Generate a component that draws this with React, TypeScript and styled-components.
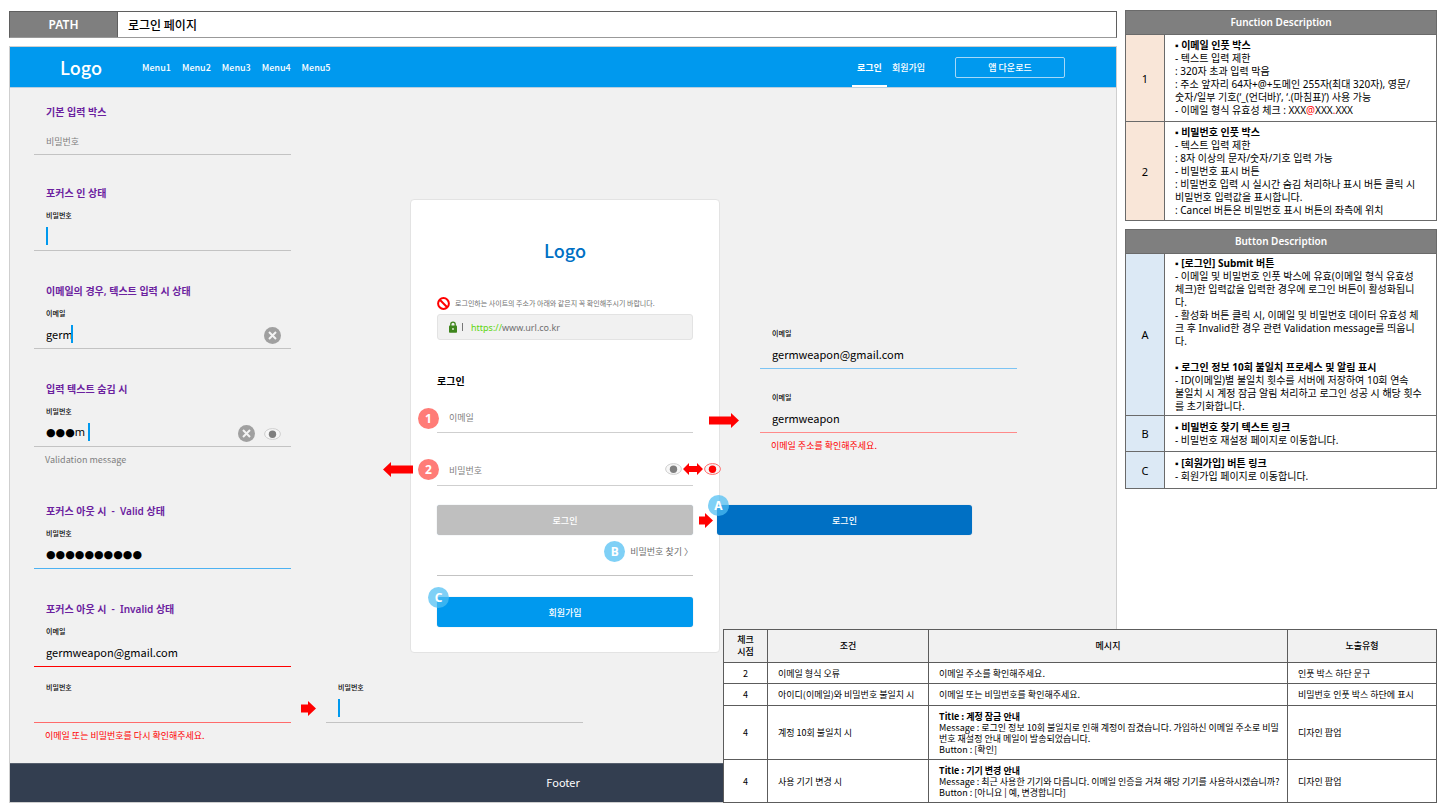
import React from 'react';
import styled, { createGlobalStyle } from 'styled-components';

const color = {
  blue: '#0099ee',
  deepBlue: '#0070c4',
  purple: '#6b219f',
  red: '#ff0000',
  grey: '#7f7f7f',
  line: '#c3c3c3',
  canvas: '#f1f1f1',
};

const font = {
  base: '"Noto Sans CJK KR", "Noto Sans", sans-serif',
  wide: '"Noto Sans", "Noto Sans CJK KR", sans-serif',
};

const GlobalStyle = createGlobalStyle`
  *, *::before, *::after { box-sizing: border-box; }
  body {
    margin: 0;
    background: #fff;
    color: #000;
    font-family: ${font.base};
    font-size: 10px;
    line-height: 13px;
  }
  a { color: inherit; text-decoration: none; }
  h1, h2, p { margin: 0; font-weight: 400; }
  button, input { font-family: inherit; margin: 0; }
  button { cursor: pointer; }
`;

/* ---------- page ---------- */

const Page = styled.div`
  display: grid;
  grid-template-columns: minmax(0, 1fr) 312px;
  column-gap: 8px;
  padding: 10px 7px 9px 9px;
`;

const Stage = styled.div`
  grid-column: 1;
  grid-row: 1;
  display: flex;
  flex-direction: column;
  gap: 8px;
  padding-top: 1px;
`;

const Notes = styled.aside`
  grid-column: 2;
  grid-row: 1;
  display: flex;
  flex-direction: column;
  gap: 8px;
  font-family: ${font.wide};
`;

const PathBar = styled.div`
  display: flex;
  height: 27px;
  border: 1px solid #5f5f5f;
  border-bottom-color: #999;
  line-height: 25px;
  font-size: 12px;
`;

const PathLabel = styled.div`
  width: 108px;
  background: #7f7f7f;
  border-right: 1px solid #5f5f5f;
  color: #fff;
  font-family: ${font.wide};
  font-weight: 600;
  text-align: center;
`;

const PathName = styled.h1`
  padding-left: 10px;
  font-size: 12px;
  font-weight: 500;
`;

const Frame = styled.div`
  flex: 1;
  display: flex;
  flex-direction: column;
  border: 1px solid #cfcfcf;
  background: ${color.canvas};
`;

/* ---------- site header and footer ---------- */

const Header = styled.header`
  display: flex;
  align-items: center;
  height: 41px;
  padding: 0 51px 0 50px;
  background: ${color.blue};
  border-bottom: 1px solid #b9cfdf;
  color: #fff;
  font-size: 9px;
  font-weight: 500;
`;

const Logo = styled.a<{ $tone?: string }>`
  display: block;
  color: ${(p) => p.$tone ?? '#fff'};
  font-size: 18px;
  font-weight: 500;
  line-height: 28px;
  text-align: center;
`;

const Menu = styled.nav`
  display: flex;
  flex: 1;
  gap: 11px;
  margin-left: 40px;
`;

const Account = styled.nav`
  display: flex;
  align-self: stretch;
  margin-right: 25px;
`;

const AccountLink = styled.a<{ $active?: boolean }>`
  display: flex;
  align-items: center;
  padding: 2px 5px 0;
  border-bottom: 2px solid ${(p) => (p.$active ? '#fff' : 'transparent')};
  font-weight: ${(p) => (p.$active ? 700 : 500)};
`;

const DownloadButton = styled.button`
  width: 110px;
  height: 21px;
  padding: 0;
  border: 1px solid #a5d8f8;
  border-radius: 2px;
  background: transparent;
  color: #fff;
  font-size: 9px;
  font-weight: 500;
`;

const Footer = styled.footer`
  height: 39px;
  border-top: 1px solid #565f6d;
  background: #333e50;
  color: #fff;
  font-size: 11px;
  line-height: 37px;
  text-align: center;
`;

/* ---------- canvas of states ---------- */

const Canvas = styled.main`
  flex: 1;
  display: grid;
  grid-template-columns:
    minmax(0, 257fr) minmax(0, 119fr) minmax(0, 310fr)
    minmax(0, 40fr) minmax(0, 257fr) minmax(0, 99fr);
  align-items: start;
  padding: 16px 0 19px 24px;
`;

const StateColumn = styled.div`
  grid-column: 1;
`;

const ResultColumn = styled.div`
  grid-column: 5;
  padding-top: 223px;
`;

const StateBlock = styled.section<{ $after?: number; $gap?: number }>`
  display: flex;
  flex-direction: column;
  gap: ${(p) => p.$gap ?? 8}px;
  margin-bottom: ${(p) => p.$after ?? 32}px;
`;

const StateTitle = styled.h2`
  padding-left: 12px;
  color: ${color.purple};
  font-family: ${font.wide};
  font-size: 10px;
  font-weight: 600;
  line-height: 16px;
  white-space: pre;
`;

const FieldBox = styled.div`
  position: relative;
`;

const FieldLabel = styled.label`
  display: block;
  padding-left: 12px;
  font-size: 7px;
  font-weight: 500;
  line-height: 12px;
`;

const InputRow = styled.div<{ $line: string; $tall?: boolean }>`
  position: relative;
  display: flex;
  align-items: center;
  gap: 9px;
  height: ${(p) => (p.$tall ? 34 : 30)}px;
  padding-right: 10px;
  border-bottom: 1px solid ${(p) => p.$line};
`;

const TextInput = styled.input<{ $masked?: boolean }>`
  flex: 1;
  min-width: 0;
  height: 24px;
  padding: 0 0 0 12px;
  border: 0;
  outline: 0;
  background: transparent;
  color: #000;
  font-family: ${(p) => (p.$masked ? '"Noto Sans", "DejaVu Sans", sans-serif' : font.base)};
  font-size: 11px;
  &::placeholder { color: ${color.grey}; font-size: 9px; opacity: 1; }
`;

const Caret = styled.span<{ $at: number }>`
  position: absolute;
  top: 6px;
  left: ${(p) => p.$at}px;
  width: 2px;
  height: 18px;
  background: ${color.blue};
`;

const IconButton = styled.button`
  display: flex;
  padding: 4px 0 0;
  border: 0;
  background: none;
`;

const Message = styled.p<{ $error?: boolean }>`
  padding: 5px 0 0 11px;
  color: ${(p) => (p.$error ? color.red : color.grey)};
  font-size: 9px;
  line-height: 16px;
`;

const RetryRow = styled.div`
  display: grid;
  grid-template-columns: 100% 35px 100%;
  align-items: center;
  margin-top: 6px;
  & > svg { margin: 12px auto 0; }
`;

/* ---------- login card ---------- */

const Card = styled.form`
  grid-column: 3;
  position: relative;
  margin-top: 95px;
  padding: 36px 26px 25px;
  border: 1px solid #e3e3e3;
  border-radius: 4px;
  background: #fff;
`;

const Notice = styled.p`
  display: flex;
  align-items: center;
  gap: 5px;
  margin-top: 32px;
  color: #6f6f6f;
  font-size: 7px;
  line-height: 14px;
  white-space: nowrap;
`;

const AddressBar = styled.div`
  display: flex;
  align-items: center;
  height: 26px;
  margin-top: 4px;
  padding: 0 11px;
  border: 1px solid #e3e3e3;
  border-radius: 3px;
  background: ${color.canvas};
  color: #6f6f6f;
  font-family: ${font.wide};
  font-size: 9px;
`;

const Divider = styled.span`
  width: 1px;
  height: 8px;
  margin: 0 8px 0 5px;
  background: #777;
`;

const Scheme = styled.span`
  color: #5fd60f;
`;

const CardTitle = styled.h2`
  margin: 33px 0 10px;
  font-size: 10px;
  font-weight: 700;
  line-height: 16px;
`;

const CardField = styled.div`
  position: relative;
  margin-bottom: 19px;
`;

const ActionRow = styled.div`
  position: relative;
`;

const WideButton = styled.button<{ $fill: string }>`
  display: block;
  width: 100%;
  height: 30px;
  padding: 0;
  border: 0;
  border-radius: 3px;
  background: ${(p) => p.$fill};
  box-shadow: 0 0 1px #9fb4c4;
  color: #fff;
  font-size: 9px;
  font-weight: 500;
`;

const FindRow = styled.div`
  display: flex;
  align-items: center;
  justify-content: flex-end;
  gap: 5px;
  height: 34px;
  padding-bottom: 1px;
  color: #6f6f6f;
  font-size: 9px;
`;

const Rule = styled.hr`
  margin: 6px 0 21px;
  border: 0;
  border-top: 1px solid ${color.line};
`;

const Badge = styled.span<{ $tone: 'red' | 'blue' }>`
  display: flex;
  align-items: center;
  justify-content: center;
  width: 21px;
  height: 21px;
  border-radius: 50%;
  background: ${(p) => (p.$tone === 'red' ? '#ff7c77' : 'rgba(78, 190, 242, 0.72)')};
  color: #fff;
  font-family: ${font.wide};
  font-size: 12px;
  font-weight: 700;
`;

const Pinned = styled.span<{ $x: number; $y: number }>`
  position: absolute;
  z-index: 1;
  left: ${(p) => p.$x}px;
  top: ${(p) => p.$y}px;
  display: flex;
`;

const PinnedEnd = styled.span<{ $x: number; $y: number }>`
  position: absolute;
  z-index: 1;
  left: calc(100% + ${(p) => p.$x}px);
  top: ${(p) => p.$y}px;
  display: flex;
  align-items: center;
  gap: 1px;
`;

const ResultField = styled.div`
  margin-bottom: 22px;
`;

const ResultAction = styled.div`
  position: relative;
  margin: 51px 45px 0 -43px;
`;

/* ---------- tables ---------- */

const DescriptionTable = styled.table`
  width: 100%;
  border-collapse: collapse;
  border: 1px solid #6a6a6a;
`;

const DescriptionHead = styled.th`
  height: 24px;
  padding: 0;
  border: 1px solid #6a6a6a;
  background: #7f7f7f;
  color: #fff;
  font-size: 10px;
  font-weight: 600;
`;

const DescriptionRow = styled.tr<{ $min: number }>`
  height: ${(p) => p.$min}px;
`;

const Marker = styled.th<{ $fill: string }>`
  width: 39px;
  padding: 0;
  border: 1px solid #6a6a6a;
  background: ${(p) => p.$fill};
  font-size: 11px;
  font-weight: 400;
`;

const Description = styled.td`
  padding: 2px 4px 2px 10px;
  border: 1px solid #6a6a6a;
`;

const Line = styled.div<{ $bold?: boolean }>`
  min-height: 13px;
  font-weight: ${(p) => (p.$bold ? 700 : 400)};
`;

const Bullet = styled.span`
  font-family: "Liberation Sans", sans-serif;
`;

const Red = styled.span`
  color: ${color.red};
`;

const MessageTable = styled.table`
  grid-column: 1 / -1;
  grid-row: 1;
  align-self: end;
  justify-self: end;
  z-index: 2;
  width: 50%;
  table-layout: fixed;
  border-collapse: collapse;
  background: #fff;
  font-size: 9px;
  line-height: 11px;
`;

const MessageHead = styled.th<{ $width?: string }>`
  width: ${(p) => p.$width ?? 'auto'};
  height: 33px;
  padding: 0;
  border: 1px solid #5c5c5c;
  background: ${color.canvas};
  font-weight: 500;
  line-height: 12px;
`;

const MessageRow = styled.tr<{ $min: number }>`
  height: ${(p) => p.$min}px;
`;

const Cell = styled.td<{ $center?: boolean }>`
  padding: 0 0 0 ${(p) => (p.$center ? 0 : 10)}px;
  border: 1px solid #5c5c5c;
  text-align: ${(p) => (p.$center ? 'center' : 'left')};
`;

/* ---------- drawings ---------- */

const ArrowRight = ({ length = 30 }: { length?: number }) => (
  <svg width={length} height="15" viewBox={`0 0 ${length} 15`} aria-hidden="true">
    <path d={`M0 3.5H${length - 8}V0L${length} 7.5L${length - 8} 15V11.5H0Z`} fill={color.red} />
  </svg>
);

const ArrowLeft = () => (
  <svg width="30" height="15" viewBox="0 0 30 15" aria-hidden="true">
    <path d="M30 3.5H8V0L0 7.5L8 15V11.5H30Z" fill={color.red} />
  </svg>
);

const ArrowBoth = () => (
  <svg width="20" height="12" viewBox="0 0 20 12" aria-hidden="true">
    <path d="M0 6L6 0V3H14V0L20 6L14 12V9H6V12Z" fill={color.red} />
  </svg>
);

const Eye = ({ tone = '#7f7f7f', rim = '#c9c9c9' }: { tone?: string; rim?: string }) => (
  <svg width="17" height="12" viewBox="0 0 17 12" aria-hidden="true">
    <ellipse cx="8.5" cy="6" rx="7.9" ry="5.4" fill="#f7f7f7" stroke={rim} strokeWidth="0.9" />
    <circle cx="8.5" cy="6.3" r="3.7" fill={tone} />
  </svg>
);

const Clear = () => (
  <svg width="17" height="17" viewBox="0 0 17 17" aria-hidden="true">
    <circle cx="8.5" cy="8.5" r="8.5" fill="#a0a0a0" />
    <path d="M5 5L12 12M12 5L5 12" stroke="#f4f4f4" strokeWidth="2" />
  </svg>
);

const Prohibited = () => (
  <svg width="13" height="13" viewBox="0 0 13 13" aria-hidden="true">
    <circle cx="6.5" cy="6.5" r="5.4" fill="#fff" stroke={color.red} strokeWidth="2" />
    <path d="M2.8 2.8L10.2 10.2" stroke={color.red} strokeWidth="2" />
  </svg>
);

const Lock = () => (
  <svg width="8" height="12" viewBox="0 0 8 12" aria-hidden="true">
    <path d="M1.8 5.5V3.3a2.2 2.2 0 0 1 4.4 0V5.5" fill="none" stroke="#3f861d" strokeWidth="1.3" />
    <rect x="0" y="4.5" width="8" height="7.2" rx="0.8" fill="#3f861d" />
    <circle cx="4" cy="8" r="0.9" fill="#e8f2e2" />
  </svg>
);

/* ---------- pieces ---------- */

type FieldProps = {
  id: string;
  label?: string;
  value?: string;
  placeholder?: string;
  line?: string;
  masked?: boolean;
  caret?: number;
  children?: React.ReactNode;
};

const Field = ({ id, label, value, placeholder, line = color.line, masked, caret, children }: FieldProps) => (
  <FieldBox>
    {label && <FieldLabel htmlFor={id}>{label}</FieldLabel>}
    <InputRow $line={line}>
      <TextInput
        id={id}
        aria-label={label ? undefined : placeholder}
        defaultValue={value}
        placeholder={placeholder}
        $masked={masked}
      />
      {children}
      {caret !== undefined && <Caret $at={caret} />}
    </InputRow>
  </FieldBox>
);

type NoteLine = { title?: string; text?: React.ReactNode };
type Note = { mark: string; min: number; lines: NoteLine[] };

const functionNotes: Note[] = [
  {
    mark: '1',
    min: 87,
    lines: [
      { title: '이메일 인풋 박스' },
      { text: '- 텍스트 입력 제한' },
      { text: ': 320자 초과 입력 막음' },
      { text: ': 주소 앞자리 64자+@+도메인 255자(최대 320자), 영문/' },
      { text: '숫자/일부 기호(‘_(언더바)’, ‘.(마침표)’) 사용 가능' },
      {
        text: (
          <>
            - 이메일 형식 유효성 체크 : XXX<Red>@</Red>XXX<Red>.</Red>XXX
          </>
        ),
      },
    ],
  },
  {
    mark: '2',
    min: 99,
    lines: [
      { title: '비밀번호 인풋 박스' },
      { text: '- 텍스트 입력 제한' },
      { text: ': 8자 이상의 문자/숫자/기호 입력 가능' },
      { text: '- 비밀번호 표시 버튼' },
      { text: ': 비밀번호 입력 시 실시간 숨김 처리하나 표시 버튼 클릭 시' },
      { text: '비밀번호 입력값을 표시합니다.' },
      { text: ': Cancel 버튼은 비밀번호 표시 버튼의 좌측에 위치' },
    ],
  },
];

const buttonNotes: Note[] = [
  {
    mark: 'A',
    min: 162,
    lines: [
      { title: '[로그인] Submit 버튼' },
      { text: '- 이메일 및 비밀번호 인풋 박스에 유효(이메일 형식 유효성' },
      { text: '체크)한 입력값을 입력한 경우에 로그인 버튼이 활성화됩니' },
      { text: '다.' },
      { text: '- 활성화 버튼 클릭 시, 이메일 및 비밀번호 데이터 유효성 체' },
      { text: '크 후 Invalid한 경우 관련 Validation message를 띄웁니' },
      { text: '다.' },
      {},
      { title: '로그인 정보 10회 불일치 프로세스 및 알림 표시' },
      { text: '- ID(이메일)별 불일치 횟수를 서버에 저장하여 10회 연속' },
      { text: '불일치 시 계정 잠금 알림 처리하고 로그인 성공 시 해당 횟수' },
      { text: '를 초기화합니다.' },
    ],
  },
  {
    mark: 'B',
    min: 36,
    lines: [{ title: '비밀번호 찾기 텍스트 링크' }, { text: '- 비밀번호 재설정 페이지로 이동합니다.' }],
  },
  {
    mark: 'C',
    min: 37,
    lines: [{ title: '[회원가입] 버튼 링크' }, { text: '- 회원가입 페이지로 이동합니다.' }],
  },
];

const NoteTable = ({ title, fill, notes }: { title: string; fill: string; notes: Note[] }) => (
  <DescriptionTable>
    <thead>
      <tr>
        <DescriptionHead colSpan={2}>{title}</DescriptionHead>
      </tr>
    </thead>
    <tbody>
      {notes.map((note) => (
        <DescriptionRow key={note.mark} $min={note.min}>
          <Marker scope="row" $fill={fill}>
            {note.mark}
          </Marker>
          <Description>
            {note.lines.map((line, i) =>
              line.title ? (
                <Line key={i} $bold>
                  <Bullet>▪</Bullet> {line.title}
                </Line>
              ) : (
                <Line key={i}>{line.text}</Line>
              ),
            )}
          </Description>
        </DescriptionRow>
      ))}
    </tbody>
  </DescriptionTable>
);

const menus = ['Menu1', 'Menu2', 'Menu3', 'Menu4', 'Menu5'];

export default function App() {
  return (
    <>
      <GlobalStyle />
      <Page>
        <Stage>
          <PathBar>
            <PathLabel>PATH</PathLabel>
            <PathName>로그인 페이지</PathName>
          </PathBar>

          <Frame>
            <Header>
              <Logo href="#home">Logo</Logo>
              <Menu>
                {menus.map((m) => (
                  <a key={m} href={`#${m}`}>
                    {m}
                  </a>
                ))}
              </Menu>
              <Account>
                <AccountLink href="#login" $active>
                  로그인
                </AccountLink>
                <AccountLink href="#join">회원가입</AccountLink>
              </Account>
              <DownloadButton type="button">앱 다운로드</DownloadButton>
            </Header>

            <Canvas>
              <StateColumn>
                <StateBlock $gap={5} $after={30}>
                  <StateTitle>기본 입력 박스</StateTitle>
                  <Field id="basic" placeholder="비밀번호" />
                </StateBlock>

                <StateBlock>
                  <StateTitle>포커스 인 상태</StateTitle>
                  <Field id="focus" label="비밀번호" caret={12} />
                </StateBlock>

                <StateBlock>
                  <StateTitle>이메일의 경우, 텍스트 입력 시 상태</StateTitle>
                  <Field id="typing" label="이메일" value="germ" caret={37}>
                    <IconButton type="button" aria-label="Cancel">
                      <Clear />
                    </IconButton>
                  </Field>
                </StateBlock>

                <StateBlock $after={35}>
                  <StateTitle>입력 텍스트 숨김 시</StateTitle>
                  <div>
                    <Field id="hidden" label="비밀번호" value="●●●m" masked caret={54}>
                      <IconButton type="button" aria-label="Cancel">
                        <Clear />
                      </IconButton>
                      <IconButton type="button" aria-label="비밀번호 표시">
                        <Eye />
                      </IconButton>
                    </Field>
                    <Message>Validation message</Message>
                  </div>
                </StateBlock>

                <StateBlock>
                  <StateTitle>{'포커스 아웃 시  -  Valid 상태'}</StateTitle>
                  <Field id="valid" label="비밀번호" value="●●●●●●●●●●" masked line="#4db2f2" />
                </StateBlock>

                <StateBlock $after={0}>
                  <StateTitle>{'포커스 아웃 시  -  Invalid 상태'}</StateTitle>
                  <Field id="invalid-email" label="이메일" value="germweapon@gmail.com" line={color.red} />
                  <div>
                    <RetryRow>
                      <Field id="invalid-password" label="비밀번호" line="#ff6b6b" />
                      <ArrowRight length={15} />
                      <Field id="retry-password" label="비밀번호" caret={12} />
                    </RetryRow>
                    <Message $error>이메일 또는 비밀번호를 다시 확인해주세요.</Message>
                  </div>
                </StateBlock>
              </StateColumn>

              <Card>
                <Logo href="#home" $tone={color.deepBlue}>
                  Logo
                </Logo>
                <Notice>
                  <Prohibited />
                  로그인하는 사이트의 주소가 아래와 같은지 꼭 확인해주시기 바랍니다.
                </Notice>
                <AddressBar>
                  <Lock />
                  <Divider />
                  <span>
                    <Scheme>https://</Scheme>www.url.co.kr
                  </span>
                </AddressBar>

                <CardTitle>로그인</CardTitle>

                <CardField>
                  <Pinned $x={-19} $y={9}>
                    <Badge $tone="red">1</Badge>
                  </Pinned>
                  <InputRow $line="#cfcfcf" $tall>
                    <TextInput aria-label="이메일" placeholder="이메일" />
                  </InputRow>
                  <PinnedEnd $x={16} $y={14}>
                    <ArrowRight />
                  </PinnedEnd>
                </CardField>

                <CardField>
                  <Pinned $x={-54} $y={10}>
                    <ArrowLeft />
                  </Pinned>
                  <Pinned $x={-19} $y={7}>
                    <Badge $tone="red">2</Badge>
                  </Pinned>
                  <InputRow $line="#cfcfcf" $tall>
                    <TextInput aria-label="비밀번호" placeholder="비밀번호" />
                  </InputRow>
                  <PinnedEnd $x={-28} $y={11}>
                    <Eye />
                    <ArrowBoth />
                    <Eye tone={color.red} rim="#ff5a5a" />
                  </PinnedEnd>
                </CardField>

                <ActionRow>
                  <WideButton type="submit" $fill="#bfbfbf">
                    로그인
                  </WideButton>
                  <PinnedEnd $x={6} $y={8}>
                    <ArrowRight length={14} />
                  </PinnedEnd>
                </ActionRow>

                <FindRow>
                  <Badge $tone="blue">B</Badge>
                  <a href="#find">비밀번호 찾기 〉</a>
                </FindRow>
                <Rule />

                <ActionRow>
                  <Pinned $x={-9} $y={-10}>
                    <Badge $tone="blue">C</Badge>
                  </Pinned>
                  <WideButton type="button" $fill={color.blue}>
                    회원가입
                  </WideButton>
                </ActionRow>
              </Card>

              <ResultColumn>
                <ResultField>
                  <Field id="email-ok" label="이메일" value="germweapon@gmail.com" line="#7cc4f4" />
                </ResultField>
                <Field id="email-error" label="이메일" value="germweapon" line="#ff8a8a" />
                <Message $error>이메일 주소를 확인해주세요.</Message>
                <ResultAction>
                  <Pinned $x={-9} $y={-10}>
                    <Badge $tone="blue">A</Badge>
                  </Pinned>
                  <WideButton type="button" $fill={color.deepBlue}>
                    로그인
                  </WideButton>
                </ResultAction>
              </ResultColumn>
            </Canvas>

            <Footer>Footer</Footer>
          </Frame>
        </Stage>

        <Notes>
          <NoteTable title="Function Description" fill="#f9e6d8" notes={functionNotes} />
          <NoteTable title="Button Description" fill="#dce9f5" notes={buttonNotes} />
        </Notes>

        <MessageTable>
          <thead>
            <tr>
              <MessageHead $width="44px">
                체크
                <br />
                시점
              </MessageHead>
              <MessageHead $width="161px">조건</MessageHead>
              <MessageHead>메시지</MessageHead>
              <MessageHead $width="149px">노출유형</MessageHead>
            </tr>
          </thead>
          <tbody>
            <MessageRow $min={21}>
              <Cell $center>2</Cell>
              <Cell>이메일 형식 오류</Cell>
              <Cell>이메일 주소를 확인해주세요.</Cell>
              <Cell>인풋 박스 하단 문구</Cell>
            </MessageRow>
            <MessageRow $min={22}>
              <Cell $center>4</Cell>
              <Cell>아이디(이메일)와 비밀번호 불일치 시</Cell>
              <Cell>이메일 또는 비밀번호를 확인해주세요.</Cell>
              <Cell>비밀번호 인풋 박스 하단에 표시</Cell>
            </MessageRow>
            <MessageRow $min={54}>
              <Cell $center>4</Cell>
              <Cell>계정 10회 불일치 시</Cell>
              <Cell>
                <b>Title : 계정 잠금 안내</b>
                <br />
                Message : 로그인 정보 10회 불일치로 인해 계정이 잠겼습니다. 가입하신 이메일 주소로 비밀
                <br />
                번호 재설정 안내 메일이 발송되었습니다.
                <br />
                Button : [확인]
              </Cell>
              <Cell>디자인 팝업</Cell>
            </MessageRow>
            <MessageRow $min={43}>
              <Cell $center>4</Cell>
              <Cell>사용 기기 변경 시</Cell>
              <Cell>
                <b>Title : 기기 변경 안내</b>
                <br />
                Message : 최근 사용한 기기와 다릅니다. 이메일 인증을 거쳐 해당 기기를 사용하시겠습니까?
                <br />
                Button : [아니요 | 예, 변경합니다]
              </Cell>
              <Cell>디자인 팝업</Cell>
            </MessageRow>
          </tbody>
        </MessageTable>
      </Page>
    </>
  );
}
